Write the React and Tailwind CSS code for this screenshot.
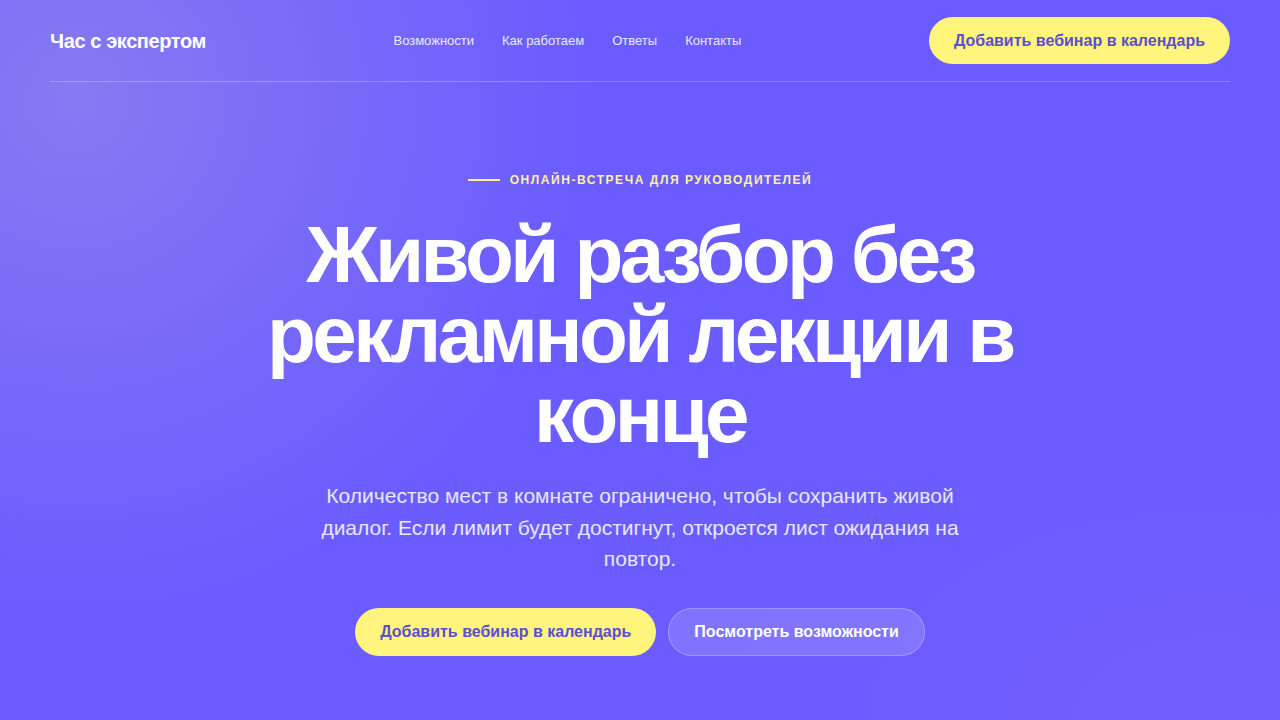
export default function App() {
  const links = ['Возможности', 'Как работаем', 'Ответы', 'Контакты'];

  return (
    <div
      className="min-h-screen w-full bg-[#6a5cff] bg-[radial-gradient(circle_at_6%_14%,rgba(200,190,210,0.30),transparent_38%),radial-gradient(ellipse_at_95%_100%,rgba(255,130,220,0.05),transparent_30%)] text-white"
      style={{ fontFamily: '"Liberation Sans", Arial, sans-serif' }}
    >
      {/* Header */}
      <header className="mx-[50px] flex h-[82px] items-center justify-between border-b border-white/25">
        <div className="text-[20px] font-bold tracking-[-0.02em]">Час с экспертом</div>
        <nav className="flex items-center gap-7 text-[13px] text-white/85">
          {links.map((l) => (
            <a key={l} href="#">{l}</a>
          ))}
        </nav>
        <button className="h-[47px] rounded-full bg-[#fff47c] px-[25px] text-[16px] font-bold text-[#5b4fd2]">
          Добавить вебинар в календарь
        </button>
      </header>

      {/* Hero */}
      <main className="flex flex-col items-center px-6 pt-[90px] text-center">
        <div className="mb-[27px] flex items-center gap-[10px]">
          <span className="h-[2px] w-8 bg-[#fff0a0]" />
          <span className="text-[12px] font-bold uppercase leading-4 tracking-[0.13em] text-[#fff0a0]">
            Онлайн-встреча для руководителей
          </span>
        </div>

        <h1 className="max-w-[800px] text-[80px] font-bold leading-none tracking-[-0.045em]">
          Живой разбор без рекламной лекции в конце
        </h1>

        <p className="mt-[25px] max-w-[680px] text-[21px] leading-[1.5] text-white/85">
          Количество мест в комнате ограничено, чтобы сохранить живой диалог. Если лимит будет достигнут, откроется лист ожидания на повтор.
        </p>

        <div className="mt-[33px] flex items-center gap-3">
          <button className="h-12 rounded-full bg-[#fff47c] px-[25px] text-[16px] font-bold text-[#5b4fd2]">
            Добавить вебинар в календарь
          </button>
          <button className="h-12 rounded-full border border-white/25 bg-white/15 px-[25px] text-[16px] font-bold text-white">
            Посмотреть возможности
          </button>
        </div>
      </main>
    </div>
  );
}
